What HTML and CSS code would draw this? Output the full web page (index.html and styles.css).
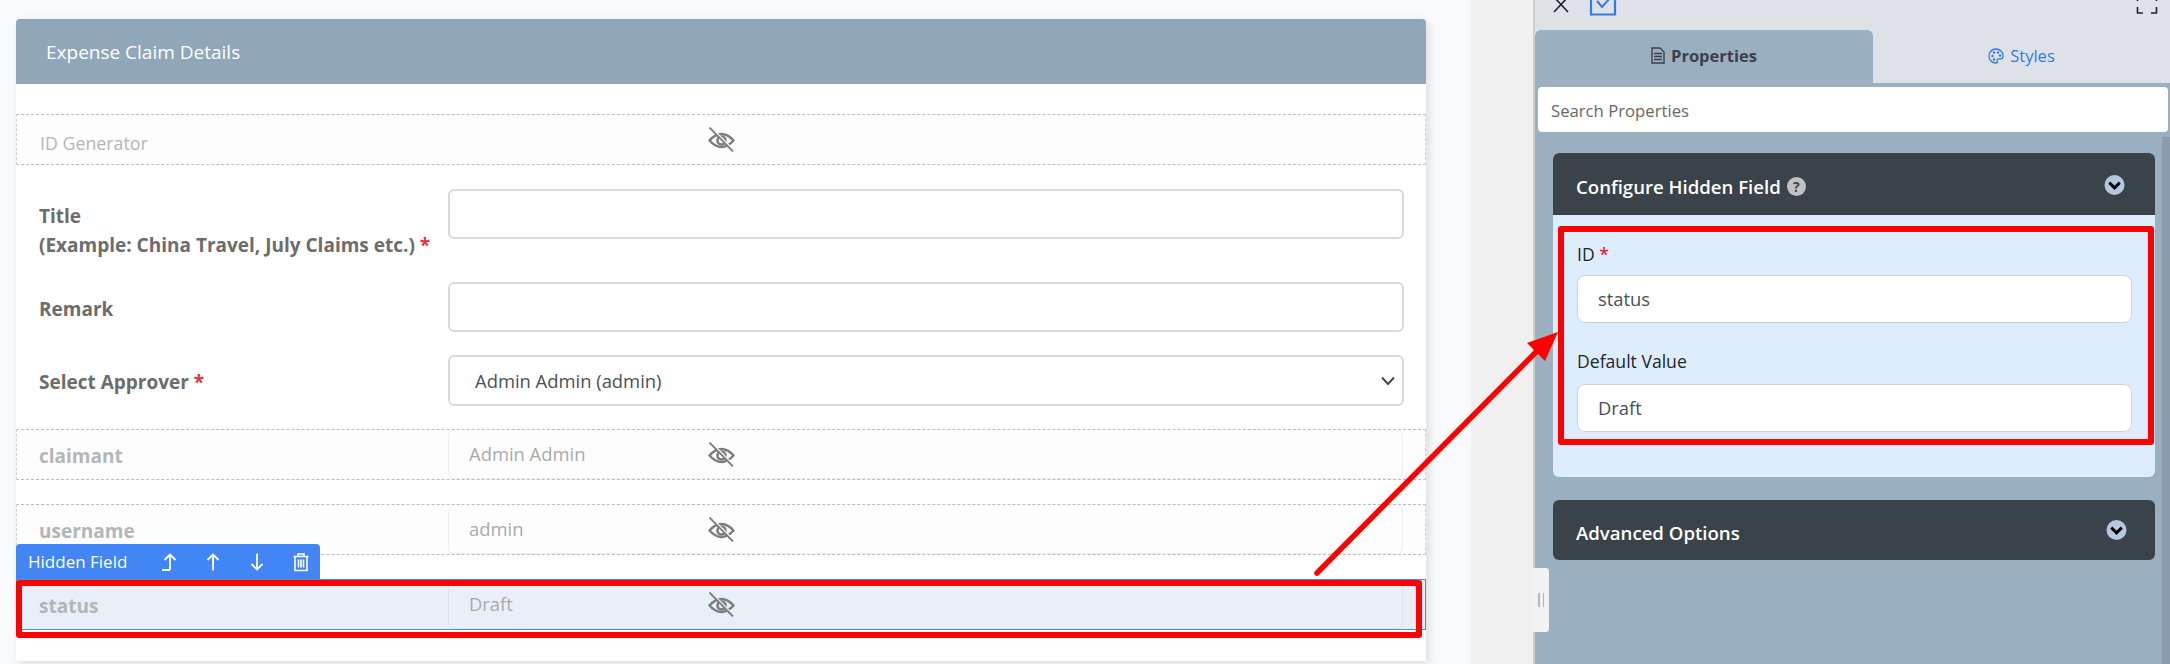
FILE: index.html
```html
<!DOCTYPE html>
<html lang="en">
  <head>
    <meta charset="UTF-8" />
    <title>Expense Claim Details</title>
    <link rel="stylesheet" href="styles.css">
  </head>
  <body>
    <svg class="sprite" width="0" height="0">
      <symbol id="eye-off" viewBox="0 0 27 25">
        <path d="M1.5 13.5C5 9.5 9 7 13.5 7S22 9.5 25.5 13.5C22 17.5 18 20 13.5 20S5 17.5 1.5 13.5Z" fill="none" stroke="currentColor" stroke-width="2.4"/>
        <circle cx="13.5" cy="13.5" r="4" fill="none" stroke="currentColor" stroke-width="2.6"/>
        <path d="M3 0.5L26.5 24.5" stroke="var(--row-bg)" stroke-width="2"/>
        <path d="M1.5 0.5L25 24.5" stroke="currentColor" stroke-width="1.8"/>
      </symbol>
      <symbol id="circle-chevron" viewBox="0 0 22 22">
        <circle cx="11" cy="11" r="10.5" fill="#b5c9de"/>
        <path d="M5.5 8.5L11 14L16.5 8.5" fill="none" stroke="#000" stroke-width="3"/>
      </symbol>
    </svg>

    <main class="canvas">
      <section class="card">
        <h2 class="card-title">Expense Claim Details</h2>
        <div class="card-body">
          <div class="row hidden-row generator">
            <span class="generator-label">ID Generator</span>
            <svg class="eye"><use href="#eye-off"/></svg>
          </div>

          <div class="row tall">
            <label class="label">Title<br>(Example: China Travel, July Claims etc.) <em>*</em></label>
            <div class="control"></div>
          </div>
          <div class="row">
            <label class="label">Remark</label>
            <div class="control"></div>
          </div>
          <div class="row">
            <label class="label">Select Approver <em>*</em></label>
            <div class="control select">
              <span>Admin Admin (admin)</span>
              <svg width="16" height="10" viewBox="0 0 16 10"><path d="M2 1.5L8 8L14 1.5" fill="none" stroke="#444b52" stroke-width="2"/></svg>
            </div>
          </div>
          <div class="row hidden-row">
            <label class="label">claimant</label>
            <div class="control">Admin Admin</div>
            <svg class="eye"><use href="#eye-off"/></svg>
          </div>
          <div class="row hidden-row">
            <label class="label">username</label>
            <div class="control">admin</div>
            <svg class="eye"><use href="#eye-off"/></svg>
          </div>
          <div class="row hidden-row selected">
            <div class="field-tools">
              <span>Hidden Field</span>
              <svg width="20" height="20" viewBox="0 0 20 20"><path d="M11 18V2.5M5.5 8L11 2.5L16.5 8M11 18H3" fill="none" stroke="#fff" stroke-width="1.8"/></svg>
              <svg width="20" height="20" viewBox="0 0 20 20"><path d="M10 18.5V2.5M4.5 8L10 2.5L15.5 8" fill="none" stroke="#fff" stroke-width="1.8"/></svg>
              <svg width="20" height="20" viewBox="0 0 20 20"><path d="M10 1.5V17.5M4.5 12L10 17.5L15.5 12" fill="none" stroke="#fff" stroke-width="1.8"/></svg>
              <svg width="20" height="20" viewBox="0 0 20 20"><path d="M2.5 4.5H17.5M7 4.5V2H13V4.5M4 4.5V18.5H16V4.5M7.5 7.5V15.5M10 7.5V15.5M12.5 7.5V15.5" fill="none" stroke="#fff" stroke-width="1.6"/></svg>
            </div>
            <label class="label">status</label>
            <div class="control">Draft</div>
            <svg class="eye"><use href="#eye-off"/></svg>
          </div>
        </div>
      </section>
    </main>

    <div class="gutter"></div>

    <aside class="panel">
      <div class="panel-top">
        <div class="panel-actions">
          <svg width="18" height="14" viewBox="0 0 18 14"><path d="M2 -3L16 12M16 -3L2 12" stroke="#222" stroke-width="1.6"/></svg>
          <svg class="check" width="28" height="16" viewBox="0 0 28 16"><path d="M2 -4V14.5H26V-4" fill="none" stroke="#2f7be6" stroke-width="2.2"/><path d="M8 1L13 7L21 -2" fill="none" stroke="#2f7be6" stroke-width="2"/></svg>
          <svg class="expand" width="22" height="14" viewBox="0 0 22 14"><path d="M1.5 7V13H7M15 13H20.5V7M1.5 0V1M20.5 0V1" fill="none" stroke="#222" stroke-width="1.6"/></svg>
        </div>
        <div class="tabs">
          <div class="tab active">
            <svg width="14" height="17" viewBox="0 0 14 17"><path d="M1 1H9L13 5V16H1Z" fill="#9aafc0" stroke="#3a424a" stroke-width="1.4"/><path d="M3 6.5H11M3 9.5H11M3 12.5H11" stroke="#3a424a" stroke-width="1.4"/></svg>
            Properties
          </div>
          <div class="tab">
            <svg width="16" height="16" viewBox="0 0 16 16"><path d="M8 1C3.8 1 1 4 1 8C1 12 4 15 8 15C9.5 15 9.8 14 9.3 13C8.8 11.8 9.5 10.8 10.8 10.8H13C14.3 10.8 15 9.8 15 8C15 4 12 1 8 1Z" fill="none" stroke="#2f7be6" stroke-width="1.3"/><circle cx="4.5" cy="8" r="1.2" fill="#2f7be6"/><circle cx="6" cy="4.5" r="1.2" fill="#2f7be6"/><circle cx="10" cy="4.5" r="1.2" fill="#2f7be6"/><circle cx="12" cy="7.5" r="1.2" fill="#2f7be6"/><circle cx="6" cy="11.5" r="1.2" fill="#2f7be6"/></svg>
            Styles
          </div>
        </div>
      </div>

      <div class="panel-main">
        <div class="search">Search Properties</div>
        <div class="scroll-track"></div>

        <div class="accordion">
          <div class="accordion-head">
            <span>Configure Hidden Field</span>
            <span class="help">?</span>
            <svg class="toggle" width="22" height="22"><use href="#circle-chevron"/></svg>
          </div>
          <div class="accordion-body">
            <div class="prop-label">ID <em>*</em></div>
            <div class="prop-input">status</div>
            <div class="prop-label second">Default Value</div>
            <div class="prop-input">Draft</div>
          </div>
        </div>

        <div class="accordion-head closed">
          <span>Advanced Options</span>
          <svg class="toggle" width="22" height="22"><use href="#circle-chevron"/></svg>
        </div>

        <div class="grip"><i></i><i></i></div>
      </div>
    </aside>

    <!-- red annotations on top of the screenshot -->
    <div class="mark mark-left"></div>
    <div class="mark mark-right"></div>
    <svg class="mark-arrow" width="2170" height="664" viewBox="0 0 2170 664">
      <path d="M1317 573L1537 351" fill="none" stroke="#f00" stroke-width="5.5" stroke-linecap="round"/>
      <path d="M1558 332L1527 343L1545 361Z" fill="#f00"/>
    </svg>
  </body>
</html>
```

FILE: styles.css
```css
* {
  box-sizing: border-box;
}

html, body {
  margin: 0;
  height: 664px;
  overflow: hidden;
}

body {
  display: flex;
  font-family: "Open Sans", "Noto Sans", sans-serif;
  font-size: 18.4px;
  color: #212529;
  background-color: #f8fafc;
  position: relative;
}

.sprite {
  position: absolute;
}

em {
  font-style: normal;
  color: #dc3545;
}

/* left form */
.canvas {
  width: 1471px;
  flex: none;
  padding: 19px 45px 0 16px;
}

.card {
  height: 642px;
  background: #fff;
  border-radius: 4px 4px 0 0;
  box-shadow: 3px 3px 10px rgba(0, 0, 0, 0.12);
}

.card-title {
  margin: 0;
  height: 65px;
  padding: 0 30px;
  display: flex;
  align-items: center;
  font-size: 19px;
  font-weight: 400;
  color: #fff;
  background-color: #90a6b9;
  border-radius: 4px 4px 0 0;
}

.card-body {
  padding-top: 30px;
}

.row {
  display: flex;
  position: relative;
  margin-bottom: 23px;
  padding-right: 22px;
}

.tall {
  height: 70px;
}

.label {
  width: 432px;
  flex: none;
  padding: 13px 0 0 23px;
  font-weight: 700;
  font-size: 19px;
  line-height: 29px;
  color: #6c6c6c;
}

.control {
  flex: 1;
  height: 50px;
  padding: 8px 20px;
  line-height: 29px;
  background: #fff;
  border: 2px solid #dadada;
  border-radius: 6px;
  color: #495057;
}

.select {
  height: 51px;
  display: flex;
  justify-content: space-between;
  align-items: center;
  padding: 0 6px 0 25px;
}

.hidden-row {
  --row-bg: #fdfdfd;
  height: 51px;
  margin-bottom: 24px;
  background-color: var(--row-bg);
  border: 1px dashed #bdbdbd;
  border-left-color: #d0d0d0;
  border-right-color: #d0d0d0;
}

.hidden-row .label {
  width: 431px;
  padding: 12px 0 0 22px;
  color: #b3b6b9;
}

.hidden-row .control {
  height: 49px;
  padding-top: 9px;
  border-width: 0 1px 1px;
  border-color: #eeeeee;
  background: transparent;
  color: #aaa;
}

.generator {
  padding-left: 23px;
  align-items: center;
}

.generator-label {
  padding-top: 6px;
  font-size: 17.8px;
  color: #b5b5b5;
}

.eye {
  position: absolute;
  left: 691px;
  top: 12px;
  width: 27px;
  height: 25px;
  color: #7d7d7d;
}

.selected {
  --row-bg: #e8eff9;
  border: 1px solid #5d88c6;
}

.selected .control {
  border-color: #dde3ec;
}

.field-tools {
  position: absolute;
  left: -1px;
  top: -36px;
  width: 304px;
  height: 35px;
  padding: 0 0 0 12px;
  display: flex;
  align-items: center;
  gap: 24px;
  font-size: 17px;
  color: #fff;
  background-color: #4285f4;
  border-radius: 4px 4px 0 0;
}

.field-tools span {
  width: 107px;
  white-space: nowrap;
}

/* right panel */
.gutter {
  width: 62px;
  flex: none;
  background-color: #f0f0f0;
}

.panel {
  flex: 1;
  display: flex;
  flex-direction: column;
  border-left: 2px solid #cfcfcf;
}

.panel-top {
  height: 83px;
  flex: none;
  background-color: #dee2e6;
}

.panel-actions {
  height: 30px;
  display: flex;
  align-items: flex-start;
  padding-left: 17px;
  gap: 19px;
}

.panel-actions svg {
  display: block;
}

.panel-actions .expand {
  margin-left: auto;
  margin-right: 12px;
}

.tabs {
  display: flex;
  height: 53px;
}

.tab {
  flex: 1;
  display: flex;
  align-items: center;
  justify-content: center;
  gap: 6px;
  padding-bottom: 2px;
  font-size: 16.5px;
  color: #2f7be6;
}

.tab.active {
  width: 338px;
  flex: none;
  font-weight: 700;
  color: #3a424a;
  background-color: #9aafc0;
  border-radius: 6px 6px 0 0;
}

.panel-main {
  flex: 1;
  position: relative;
  padding: 4px 2px 0 3px;
  background-color: #9aafc0;
}

.scroll-track {
  position: absolute;
  top: 54px;
  right: 0;
  bottom: 0;
  width: 8px;
  background-color: #8a9dae;
}

.search {
  height: 45px;
  padding: 1px 13px 0;
  line-height: 45px;
  font-size: 16.7px;
  color: #666;
  background: #fff;
  border-radius: 4px;
}

.accordion {
  position: relative;
  margin: 21px 13px 0 15px;
  border-radius: 6px;
  overflow: hidden;
  background-color: #deedfd;
}

.accordion-head {
  height: 62px;
  display: flex;
  align-items: center;
  padding: 4px 30px 0 23px;
  gap: 6px;
  font-size: 18.6px;
  font-weight: 600;
  color: #fff;
  background-color: #3a424a;
}

.accordion-head.closed {
  position: relative;
  height: 60px;
  margin: 23px 13px 0 15px;
  padding-right: 28px;
  border-radius: 6px;
}

.help {
  width: 19px;
  height: 19px;
  border-radius: 50%;
  text-align: center;
  line-height: 19px;
  font-size: 14px;
  font-weight: 700;
  color: #3a424a;
  background-color: #c2c2c2;
}

.toggle {
  width: 21px;
  margin: -3px 0 0 auto;
}

.closed .toggle {
  margin-top: -4px;
}

.accordion-body {
  height: 262px;
  padding: 24px 23px 0 24px;
}

.prop-label {
  height: 36px;
  line-height: 30px;
  font-size: 17.6px;
}

.prop-label em {
  color: #f00;
}

.prop-label.second {
  margin-top: 23px;
  height: 38px;
}

.prop-input {
  height: 48px;
  padding: 0 20px;
  line-height: 46px;
  font-size: 18.4px;
  color: #495057;
  background: #fff;
  border: 1px solid #ced4da;
  border-radius: 8px;
}

.grip {
  position: absolute;
  left: -2px;
  top: 485px;
  width: 16px;
  height: 64px;
  display: flex;
  justify-content: center;
  align-items: center;
  gap: 3px;
  background-color: #f2f2f2;
  border-radius: 0 3px 3px 0;
}

.grip i {
  width: 1.5px;
  height: 14px;
  background-color: #b9b9b9;
}

/* annotations */
.mark {
  position: absolute;
  border: 6px solid #f00;
  border-radius: 3px;
}

.mark-left {
  left: 16px;
  top: 580px;
  width: 1406px;
  height: 58px;
}

.mark-right {
  left: 1558px;
  top: 226px;
  width: 596px;
  height: 219px;
}

.mark-arrow {
  position: absolute;
  left: 0;
  top: 0;
  pointer-events: none;
}
```
